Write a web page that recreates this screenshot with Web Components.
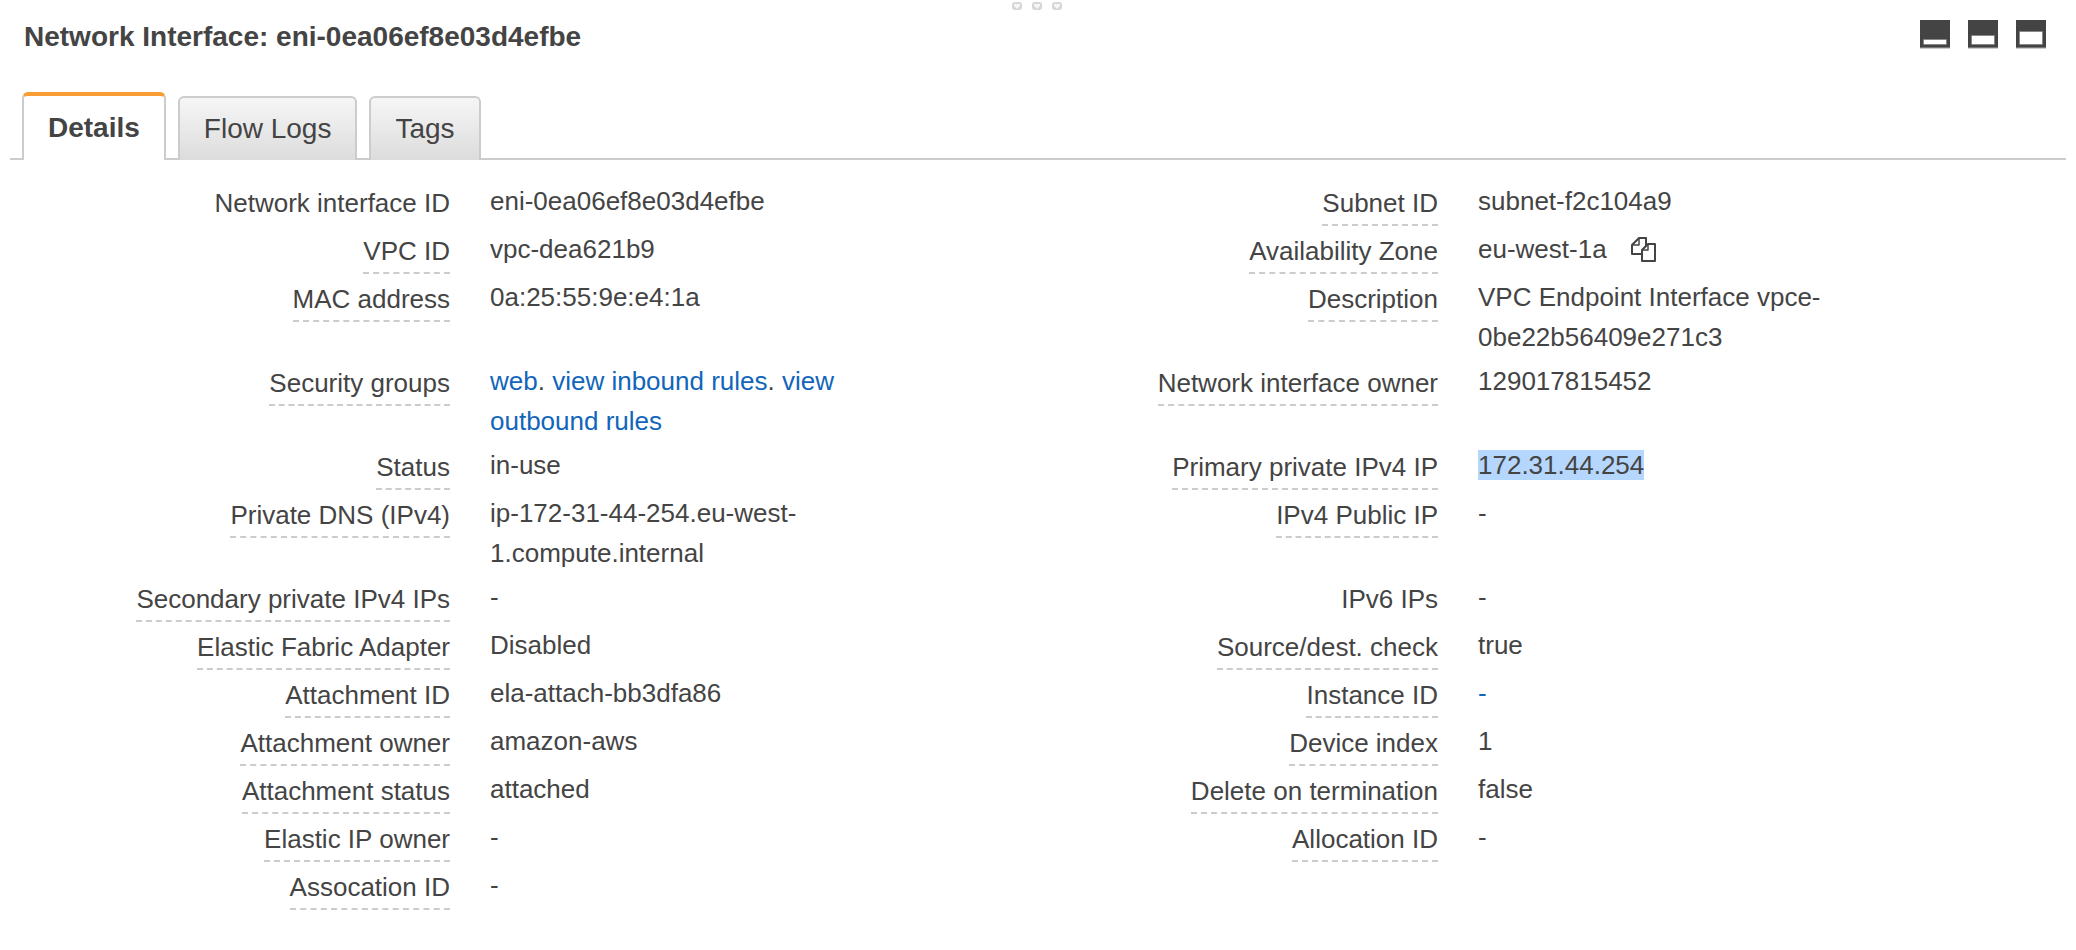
<!DOCTYPE html>
<html lang="en">
<head>
<meta charset="utf-8">
<title>Network Interface</title>
<style>
  body {
    margin: 0;
    background: #fff;
    color: #444;
    font-family: "Liberation Sans", Helvetica, Arial, sans-serif;
    font-size: 26px;
    line-height: 40px;
  }
</style>
</head>
<body>
<details-pane heading="Network Interface: eni-0ea06ef8e03d4efbe">
  <tab-bar slot="tabs">
    <tab-item selected>Details</tab-item>
    <tab-item>Flow Logs</tab-item>
    <tab-item>Tags</tab-item>
  </tab-bar>
  <detail-grid>
    <detail-field label="Network interface ID" plain>eni-0ea06ef8e03d4efbe</detail-field>
    <detail-field label="Subnet ID">subnet-f2c104a9</detail-field>
    <detail-field label="VPC ID">vpc-dea621b9</detail-field>
    <detail-field label="Availability Zone">eu-west-1a<copy-button></copy-button></detail-field>
    <detail-field label="MAC address">0a:25:55:9e:e4:1a</detail-field>
    <detail-field label="Description">VPC Endpoint Interface vpce-0be22b56409e271c3</detail-field>
    <detail-field label="Security groups"><a href="#web">web</a><span>. </span><a href="#inbound">view inbound rules</a><span>. </span><a href="#outbound">view outbound rules</a></detail-field>
    <detail-field label="Network interface owner">129017815452</detail-field>
    <detail-field label="Status">in-use</detail-field>
    <detail-field label="Primary private IPv4 IP"><mark>172.31.44.254</mark></detail-field>
    <detail-field label="Private DNS (IPv4)">ip-172-31-44-254.eu-west-1.compute.internal</detail-field>
    <detail-field label="IPv4 Public IP">-</detail-field>
    <detail-field label="Secondary private IPv4 IPs">-</detail-field>
    <detail-field label="IPv6 IPs" plain>-</detail-field>
    <detail-field label="Elastic Fabric Adapter">Disabled</detail-field>
    <detail-field label="Source/dest. check">true</detail-field>
    <detail-field label="Attachment ID">ela-attach-bb3dfa86</detail-field>
    <detail-field label="Instance ID"><a href="#instance">-</a></detail-field>
    <detail-field label="Attachment owner">amazon-aws</detail-field>
    <detail-field label="Device index">1</detail-field>
    <detail-field label="Attachment status">attached</detail-field>
    <detail-field label="Delete on termination">false</detail-field>
    <detail-field label="Elastic IP owner">-</detail-field>
    <detail-field label="Allocation ID">-</detail-field>
    <detail-field label="Assocation ID">-</detail-field>
  </detail-grid>
</details-pane>

<script>
class BaseElement extends HTMLElement {
  constructor() {
    super();
    this.attachShadow({ mode: "open" });
  }

  connectedCallback() {
    const template = document.createElement("template");
    template.innerHTML = `<style>${this.__css}</style>${this.__html}`;
    this.shadowRoot.replaceChildren(template.content.cloneNode(true));
  }
}

class DetailsPane extends BaseElement {
  get __html() {
    return `
      <drag-handle></drag-handle>
      <header>
        <h1>${this.getAttribute("heading")}</h1>
        <div class="sizes">
          <size-button label="Minimize pane" fill="4"></size-button>
          <size-button label="Half pane" fill="8"></size-button>
          <size-button label="Maximize pane" fill="12"></size-button>
        </div>
      </header>
      <slot name="tabs"></slot>
      <slot></slot>`;
  }

  get __css() {
    return `
      :host { display: block; padding: 0 10px; }
      header {
        display: flex;
        justify-content: space-between;
        align-items: flex-start;
        padding: 6px 20px 0 14px;
      }
      h1 { margin: 0; font-size: 28px; line-height: 42px; }
      .sizes { display: flex; gap: 18px; padding-top: 4px; }`;
  }
}

class DragHandle extends BaseElement {
  get __html() {
    const dots = [0, 20, 40]
      .map(x => `
        <rect x="${x}" y="0" width="10" height="8" rx="3" fill="#d6d6d6"/>
        <path d="M${x + 2} 2h6v2l-3 3l-3-3z" fill="#f6f6f6"/>`)
      .join("");
    return `<svg width="52" height="8" viewBox="0 0 52 8">${dots}</svg>`;
  }

  get __css() {
    return `
      :host { display: flex; justify-content: center; padding-top: 2px; }
      svg { display: block; }`;
  }
}

class SizeButton extends BaseElement {
  get __html() {
    const fill = Number(this.getAttribute("fill"));
    return `
      <button type="button" aria-label="${this.getAttribute("label")}">
        <svg width="30" height="29" viewBox="0 0 30 29">
          <path d="M0 0h30v27H0z" fill="#444"/>
          <path d="M0 27h30v1H0z" fill="#777"/>
          <path d="M0 28h30v1H0z" fill="#ccc"/>
          <rect x="3" y="${23 - fill}" width="24" height="${fill + 2}" rx="1" fill="#888"/>
          <rect x="4" y="${24 - fill}" width="22" height="${fill}" fill="#fff"/>
        </svg>
      </button>`;
  }

  get __css() {
    return `
      :host { display: block; }
      button { display: block; margin: 0; padding: 0; border: 0; background: none; cursor: pointer; }
      svg { display: block; }`;
  }
}

class TabBar extends BaseElement {
  get __html() {
    return `<nav role="tablist"><slot></slot></nav>`;
  }

  get __css() {
    return `
      :host { display: block; padding-top: 34px; }
      nav {
        display: flex;
        align-items: flex-end;
        gap: 12px;
        padding-left: 12px;
        box-shadow: inset 0 -2px #ccc;
      }`;
  }
}

class TabItem extends BaseElement {
  get __html() {
    const selected = this.hasAttribute("selected");
    return `<button type="button" role="tab" aria-selected="${selected}"><slot></slot></button>`;
  }

  get __css() {
    return `
      :host { display: block; }
      button {
        display: block;
        box-sizing: border-box;
        height: 64px;
        margin: 0;
        padding: 0 24px;
        border: 2px solid #ccc;
        border-bottom: 0;
        border-radius: 6px 6px 0 0;
        background: linear-gradient(#f6f6f6, #dcdcdc);
        color: #444;
        font: 28px/40px "Liberation Sans", Helvetica, Arial, sans-serif;
        cursor: pointer;
      }
      :host([selected]) button {
        height: 68px;
        border-top: 4px solid #f89c34;
        background: #fff;
        font-weight: bold;
      }`;
  }
}

class DetailGrid extends BaseElement {
  get __html() {
    return `<slot></slot>`;
  }

  get __css() {
    return `
      :host {
        display: grid;
        grid-template-columns: 1fr 1fr;
        padding: 21px 80px 21px 0;
      }`;
  }
}

class DetailField extends BaseElement {
  get __html() {
    return `
      <div class="label"><span>${this.getAttribute("label")}</span></div>
      <div class="value"><slot></slot></div>`;
  }

  get __css() {
    return `
      :host {
        display: grid;
        grid-template-columns: 11fr 9fr;
        column-gap: 40px;
        box-sizing: border-box;
        min-height: 48px;
        padding-right: 148px;
      }
      .label { display: flex; justify-content: flex-end; align-items: flex-start; padding-top: 2px; }
      .label span { padding-bottom: 1px; border-bottom: 2px dashed #ccc; }
      :host([plain]) .label span { border-bottom-color: transparent; }
      .value { padding-bottom: 4px; }
      ::slotted(a) { color: #1166bb; text-decoration: none; }
      ::slotted(mark) { background: #b5d7fd; color: inherit; }`;
  }
}

class CopyButton extends BaseElement {
  get __html() {
    return `
      <button type="button" aria-label="Copy to clipboard">
        <svg width="25" height="25" viewBox="0 0 25 25" fill="#fff" stroke="#444" stroke-width="2" stroke-linejoin="round">
          <path d="M8 1h7v16H1V8z"/>
          <path d="M8 1v7H1" fill="none" stroke-width="1.5"/>
          <path d="M17 7h7v17H11V13z"/>
          <path d="M17 7v6h-6" fill="none" stroke-width="1.5"/>
        </svg>
      </button>`;
  }

  get __css() {
    return `
      :host { display: inline-block; margin-left: 24px; vertical-align: -4px; line-height: 24px; }
      button { display: block; margin: 0; padding: 0; border: 0; background: none; cursor: pointer; }
      svg { display: block; }`;
  }
}

customElements.define("drag-handle", DragHandle);
customElements.define("size-button", SizeButton);
customElements.define("copy-button", CopyButton);
customElements.define("tab-item", TabItem);
customElements.define("tab-bar", TabBar);
customElements.define("detail-field", DetailField);
customElements.define("detail-grid", DetailGrid);
customElements.define("details-pane", DetailsPane);
</script>
</body>
</html>
